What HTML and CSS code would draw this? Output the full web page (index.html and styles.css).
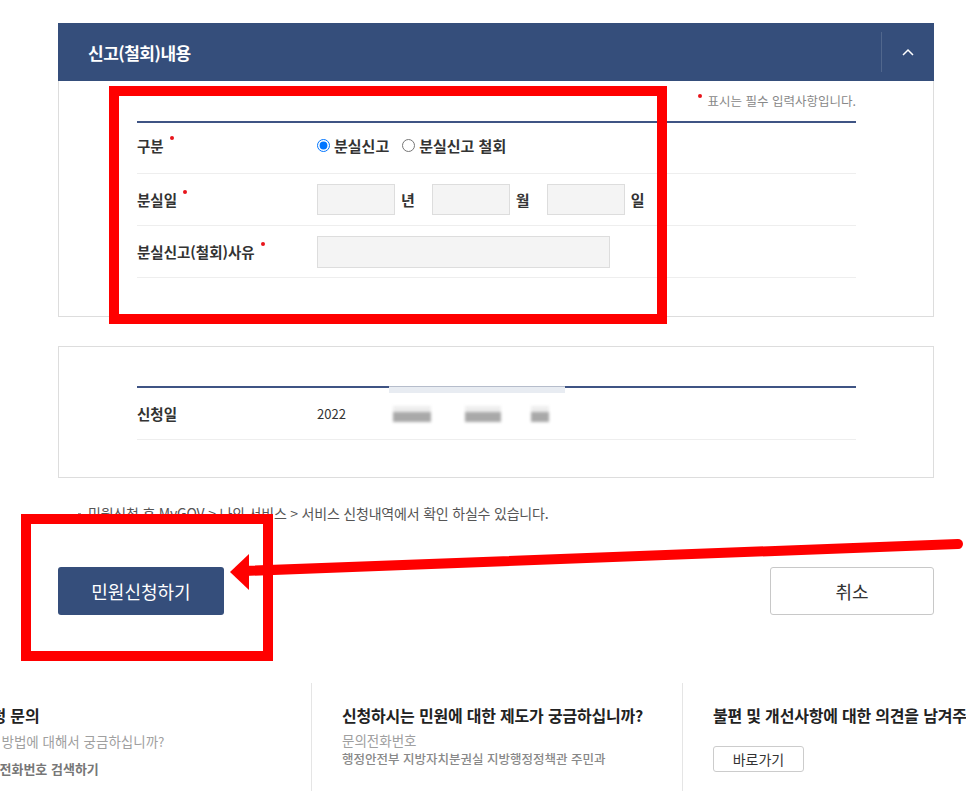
FILE: index.html
```html
<!DOCTYPE html>
<html lang="ko">
<head>
    <meta charset="UTF-8">
    <meta name="viewport" content="width=device-width, initial-scale=1.0">
    <link rel="stylesheet" href="styles.css">
    <title>분실신고 민원신청</title>
</head>
<body>
    <div class="page">
        <div class="section">
            <div class="section-head">
                <h2 class="section-title">신고(철회)내용</h2>
                <button class="toggle-btn" type="button">
                    <svg width="12" height="8" viewBox="0 0 12 8"><polyline points="1,7 6,2 11,7" fill="none" stroke="#fff" stroke-width="1.5"/></svg>
                </button>
            </div>
            <div class="section-body">
                <p class="required-note"><span class="dot"></span>표시는 필수 입력사항입니다.</p>
                <div class="form-table">
                    <div class="form-row form-row-first">
                        <div class="form-label">구분<span class="dot"></span></div>
                        <div class="form-value">
                            <label class="radio"><input type="radio" name="kind" checked>분실신고</label>
                            <label class="radio"><input type="radio" name="kind">분실신고 철회</label>
                        </div>
                    </div>
                    <div class="form-row">
                        <div class="form-label">분실일<span class="dot"></span></div>
                        <div class="form-value">
                            <input class="text-input date-input" type="text"><span class="unit">년</span>
                            <input class="text-input date-input" type="text"><span class="unit">월</span>
                            <input class="text-input date-input" type="text"><span class="unit">일</span>
                        </div>
                    </div>
                    <div class="form-row">
                        <div class="form-label">분실신고(철회)사유<span class="dot"></span></div>
                        <div class="form-value">
                            <input class="text-input reason-input" type="text">
                        </div>
                    </div>
                </div>
            </div>
        </div>

        <div class="section section-plain">
            <div class="form-table">
                <div class="form-row">
                    <div class="form-label">신청일</div>
                    <div class="form-value date-value">
                        2022
                        <span class="blur blur-a"></span>
                        <span class="blur blur-b"></span>
                        <span class="blur blur-c"></span>
                    </div>
                </div>
            </div>
            <div class="redact-bar"></div>
        </div>

        <p class="notice">민원신청 후 MyGOV &gt; 나의 서비스 &gt; 서비스 신청내역에서 확인 하실수 있습니다.</p>

        <div class="btn-row">
            <button class="btn btn-primary" type="button">민원신청하기</button>
            <button class="btn btn-cancel" type="button">취소</button>
        </div>
    </div>

    <div class="footer-wrap">
        <div class="footer">
            <div class="footer-col footer-col-first">
                <h3 class="footer-title">민원신청 문의</h3>
                <p class="footer-desc">민원신청 방법에 대해서 궁금하십니까?</p>
                <p class="footer-link">담당부서 전화번호 검색하기</p>
            </div>
            <div class="footer-col">
                <h3 class="footer-title">신청하시는 민원에 대한 제도가 궁금하십니까?</h3>
                <p class="footer-desc footer-desc-tight">문의전화번호</p>
                <p class="footer-dept">행정안전부 지방자치분권실 지방행정정책관 주민과</p>
            </div>
            <div class="footer-col">
                <h3 class="footer-title">불편 및 개선사항에 대한 의견을 남겨주세요</h3>
                <button class="footer-btn" type="button">바로가기</button>
            </div>
        </div>
    </div>

    <!-- red markup drawn over the capture -->
    <svg class="annotations" width="966" height="791" viewBox="0 0 966 791">
        <rect x="114" y="91" width="548" height="228" fill="none" stroke="#ff0000" stroke-width="10"/>
        <rect x="26" y="519" width="242" height="137" fill="none" stroke="#ff0000" stroke-width="10"/>
        <line x1="958" y1="544" x2="244" y2="571" stroke="#ff0000" stroke-width="10" stroke-linecap="round"/>
        <polygon points="230,572 249,554 249,590" fill="#ff0000"/>
    </svg>
</body>
</html>
```

FILE: styles.css
```css
html, body {
    margin: 0;
    padding: 0;
    overflow: hidden;
}

body {
    background-color: #fff;
    color: #333;
    font-family: "Noto Sans CJK KR", "Noto Sans", sans-serif;
}

.page {
    width: 876px;
    margin-left: 58px;
    padding-top: 23px;
}

/* section box */
.section-head {
    display: flex;
    align-items: center;
    height: 58px;
    background-color: #354e7b;
}

.section-title {
    flex: 1;
    margin: 0;
    padding-left: 30px;
    font-size: 17px;
    font-weight: 700;
    color: #fff;
    letter-spacing: -0.5px;
}

.toggle-btn {
    display: flex;
    align-items: center;
    justify-content: center;
    width: 53px;
    height: 40px;
    padding: 0;
    border: 0;
    border-left: 1px solid rgba(255, 255, 255, 0.14);
    background: none;
}

.section-body {
    height: 236px;
    box-sizing: border-box;
    padding: 11px 77px 0 78px;
    border: 1px solid #ddd;
    border-top: 0;
}

.section-plain {
    position: relative;
    margin-top: 29px;
    height: 132px;
    box-sizing: border-box;
    padding: 39px 77px 0 78px;
    border: 1px solid #ddd;
}

.required-note {
    margin: 0 0 11px;
    text-align: right;
    font-size: 12.5px;
    line-height: 18px;
    color: #888;
}

.dot {
    display: inline-block;
    width: 4px;
    height: 4px;
    border-radius: 50%;
    background-color: #e8141b;
}

.required-note .dot {
    margin-right: 6px;
    vertical-align: 8px;
}

/* form rows */
.form-table {
    border-top: 2px solid #3f5484;
}

.form-row {
    display: flex;
    align-items: center;
    height: 52px;
    box-sizing: border-box;
    border-bottom: 1px solid #eee;
}

.form-row-first {
    height: 51px;
    padding-bottom: 6px;
}

.form-label {
    width: 180px;
    flex-shrink: 0;
    font-size: 14.5px;
    font-weight: 700;
    color: #333;
}

.form-label .dot {
    margin-left: 6px;
    vertical-align: 12px;
}

.form-value {
    display: flex;
    align-items: center;
    font-size: 15px;
}

.radio {
    display: flex;
    align-items: center;
    gap: 4px;
    margin-right: 13px;
    font-weight: 700;
    color: #333;
}

.radio input {
    width: 13px;
    height: 13px;
    margin: 0;
}

.text-input {
    box-sizing: border-box;
    margin: 0;
    border: 1px solid #ddd;
    background-color: #f4f4f4;
}

.date-input {
    width: 78px;
    height: 31px;
}

.unit {
    margin: 0 17px 0 6px;
    font-weight: 700;
    color: #333;
}

.reason-input {
    width: 293px;
    height: 32px;
}

.date-value {
    font-size: 13px;
    color: #333;
}

.blur {
    display: inline-block;
    height: 16px;
    background: linear-gradient(to bottom, #eee 0 35%, #a9a9a9 35% 100%);
    filter: blur(1.5px);
}

.blur-a {
    width: 38px;
    margin-left: 47px;
}

.blur-b {
    width: 36px;
    margin-left: 34px;
}

.blur-c {
    width: 18px;
    margin-left: 30px;
}

.redact-bar {
    position: absolute;
    top: 39px;
    left: 330px;
    width: 176px;
    height: 6px;
    border-top: 1px solid #b6bdcb;
    background-color: #e8ecf2;
}

/* notice + buttons */
.notice {
    position: relative;
    margin: 26px 0 0;
    padding-left: 30px;
    font-size: 14px;
    line-height: 18px;
    color: #555;
    letter-spacing: -0.2px;
}

.notice::before {
    content: "";
    position: absolute;
    left: 20px;
    top: 9px;
    width: 3px;
    height: 3px;
    background-color: #999;
}

.btn-row {
    display: flex;
    justify-content: space-between;
    margin-top: 45px;
}

.btn {
    height: 48px;
    border-radius: 3px;
    font-family: inherit;
    font-size: 18px;
    cursor: pointer;
}

.btn-primary {
    width: 166px;
    border: 0;
    background-color: #354e7b;
    color: #fff;
}

.btn-cancel {
    width: 164px;
    border: 1px solid #c8c8c8;
    background-color: #fff;
    color: #333;
}

/* footer */
.footer-wrap {
    margin-top: 68px;
    overflow: hidden;
}

.footer {
    display: flex;
    margin-left: -82px;
    height: 120px;
}

.footer-col {
    flex-shrink: 0;
    width: 371px;
    box-sizing: border-box;
    padding: 21px 0 0 30px;
    border-left: 1px solid #e5e5e5;
}

.footer-col-first {
    width: 393px;
    border-left: 0;
}

.footer-title {
    margin: 0;
    font-size: 16px;
    font-weight: 700;
    line-height: 22px;
    color: #222;
    letter-spacing: -0.2px;
    white-space: nowrap;
}

.footer-desc {
    margin: 6px 0 0;
    font-size: 13.5px;
    line-height: 18px;
    color: #a0a0a0;
    white-space: nowrap;
}

.footer-desc-tight {
    line-height: 17px;
    margin-bottom: 1px;
}

.footer-link {
    margin: 10px 0 0;
    font-size: 13px;
    line-height: 18px;
    font-weight: 700;
    color: #777;
    white-space: nowrap;
}

.footer-dept {
    margin: 0;
    font-size: 12.5px;
    line-height: 18px;
    font-weight: 500;
    color: #888;
    white-space: nowrap;
}

.footer-btn {
    width: 91px;
    height: 26px;
    margin-top: 20px;
    padding: 0;
    border: 1px solid #ccc;
    border-radius: 3px;
    background-color: #fff;
    font-family: inherit;
    font-size: 14px;
    color: #333;
}

.annotations {
    position: absolute;
    top: 0;
    left: 0;
    pointer-events: none;
}
```
